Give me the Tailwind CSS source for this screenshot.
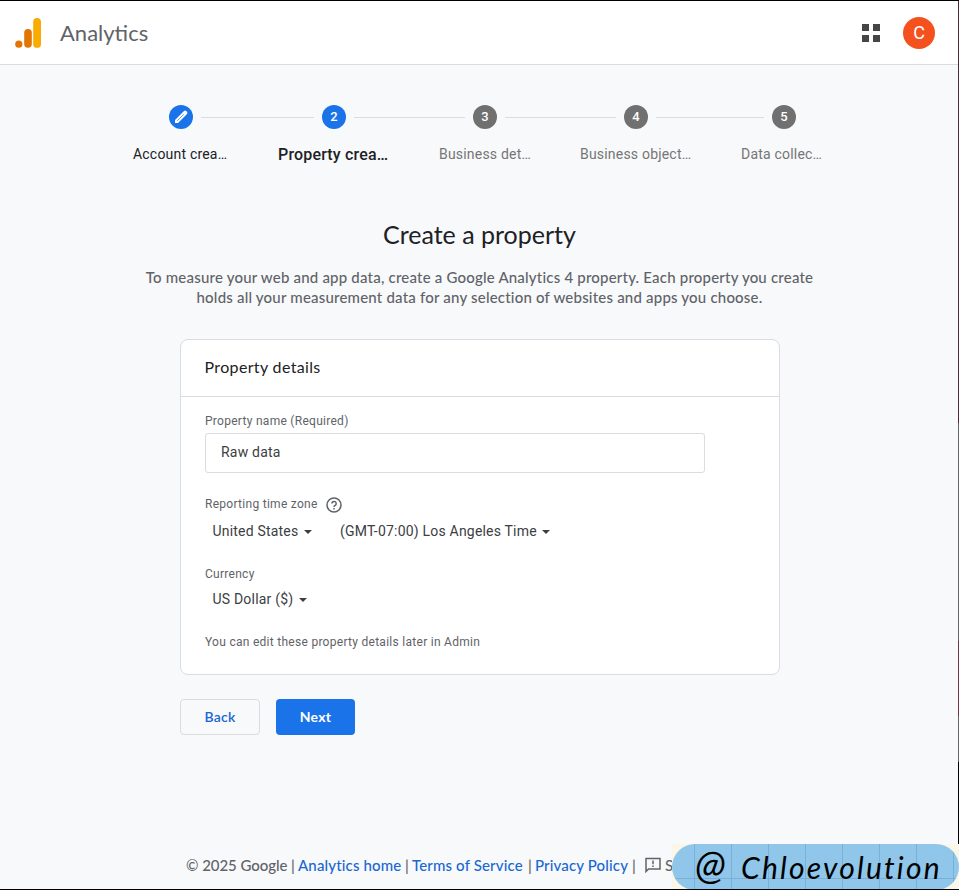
<!DOCTYPE html>
<html lang="en">
<head>
<meta charset="utf-8">
<title>Analytics</title>
<script src="https://cdn.jsdelivr.net/npm/@tailwindcss/browser@4"></script>
</head>
<body class="relative flex h-[890px] w-[959px] flex-col overflow-hidden border-t border-b border-black bg-[#f8f9fb] font-[Roboto,sans-serif] text-[#5f6368]">
<header class="flex h-16 shrink-0 items-center border-b border-[#dadce0] bg-white pr-6 pl-[15px]">
  <svg class="h-[31px] w-[27px] shrink-0" viewBox="0 0 27 31" aria-hidden="true"><circle cx="3.8" cy="27.200" r="3.600" fill="#e37400"/><rect x="9.2" y="12" width="7.600" height="18.800" rx="3.800" fill="#e37400"/><rect x="18.2" y="1" width="7.800" height="29.800" rx="3.900" fill="#f9ab00"/></svg>
  <h1 class="ml-[18px] font-[Lato,sans-serif] text-[22px] leading-7">Analytics</h1>
  <svg class="ml-auto h-[18px] w-[18px]" viewBox="0 0 18 18" fill="#444746"><path d="M0 0h7v7H0zM11 0h7v7h-7zM0 11h7v7H0zM11 11h7v7h-7z"/></svg>
  <div class="ml-[23px] flex h-8 w-8 items-center justify-center rounded-full bg-[#f4511e] text-[18px] text-white">C</div>
</header>
<main class="flex flex-1 flex-col">
  <nav class="pt-10">
    <div class="flex items-center gap-2 pl-[169px] text-[13px] font-medium text-white">
      <span class="flex h-6 w-6 items-center justify-center rounded-full bg-[#1a73e8]"><svg class="h-4 w-4" viewBox="0 0 16 16"><path d="M2 14v-3L11 2q1.200-1 2.400.2l.4.400q1.200 1.200.2 2.400L5 14z" fill="#fff"/><path d="M4.200 11.800 10.800 5.200" stroke="#1a73e8" stroke-width=".7"/></svg></span>
      <i class="h-px w-[113px] bg-[#dadce0]"></i>
      <span class="flex h-6 w-6 items-center justify-center rounded-full bg-[#1a73e8]">2</span>
      <i class="h-px w-[111px] bg-[#dadce0]"></i>
      <span class="flex h-6 w-6 items-center justify-center rounded-full bg-[#707070]">3</span>
      <i class="h-px w-[111px] bg-[#dadce0]"></i>
      <span class="flex h-6 w-6 items-center justify-center rounded-full bg-[#707070]">4</span>
      <i class="h-px w-[108px] bg-[#dadce0]"></i>
      <span class="flex h-6 w-6 items-center justify-center rounded-full bg-[#707070]">5</span>
    </div>
    <div class="mt-[15px] flex h-5 items-center pl-[133px] text-sm tracking-[0.2px] whitespace-nowrap text-[#757575]">
      <span class="w-[145px] text-[#202124]">Account crea…</span>
      <span class="w-[161px] pt-[2px] text-base font-medium tracking-[0.17px] text-[#202124]">Property crea…</span>
      <span class="w-[141px]">Business det…</span>
      <span class="w-[161px]">Business object…</span>
      <span>Data collec…</span>
    </div>
  </nav>
  <h2 class="mt-[54px] text-center font-[Lato,sans-serif] text-[25px] leading-8 text-[#202124]">Create a property</h2>
  <p class="mt-[17px] text-center font-[Lato,sans-serif] text-[15px] leading-5 font-medium tracking-[0.2px] whitespace-nowrap">To measure your web and app data, create a Google Analytics 4 property. Each property you create<br>holds all your measurement data for any selection of websites and apps you choose.</p>
  <section class="mt-8 ml-[180px] h-[336px] w-[600px] rounded-lg border border-[#dadce0] bg-white">
    <h3 class="flex h-[57px] items-center border-b border-[#dadce0] pb-[2px] pl-[23.500px] font-[Lato,sans-serif] text-base tracking-[0.35px] text-[#202124]">Property details</h3>
    <div class="flex flex-col pl-6">
      <label class="mt-4 text-xs leading-4 tracking-[0.28px]">Property name (Required)</label>
      <div class="mt-1 flex h-10 w-[500px] items-center rounded-[3px] border border-[#dadce0] pb-[2px] pl-[15px] text-sm tracking-[0.2px] text-[#3c4043]">Raw data</div>
      <div class="mt-[23px] flex h-4 items-center text-xs tracking-[0.28px]">Reporting time zone
        <svg class="mt-[2px] ml-2 h-4 w-4" viewBox="0 0 16 16" fill="none" stroke="#5f6368" stroke-width="1.500"><circle cx="8" cy="8" r="7"/><path d="M5.900 6.600a2.150 2.150 0 1 1 3.300 1.800C8.300 9 8 9.300 8 10.100"/><path d="M8 11v1.500"/></svg>
      </div>
      <div class="mt-[9px] flex h-5 items-center pl-[7.500px] text-sm tracking-[0.2px] text-[#3c4043]">
        <span>United States</span><svg class="mt-[2px] ml-[5.500px] h-1 w-2" viewBox="0 0 8 4"><path d="M0 0h8L4 4z" fill="#3c4043"/></svg>
        <span class="ml-7">(GMT-07:00) Los Angeles Time</span><svg class="mt-[2px] ml-[5px] h-1 w-2" viewBox="0 0 8 4"><path d="M0 0h8L4 4z" fill="#3c4043"/></svg>
      </div>
      <div class="mt-[25px] text-xs leading-4 tracking-[0.28px]">Currency</div>
      <div class="mt-[7px] flex h-5 items-center pl-[7.500px] text-sm tracking-[0.2px] text-[#3c4043]"><span>US Dollar ($)</span><svg class="mt-[2px] ml-[5.500px] h-1 w-2" viewBox="0 0 8 4"><path d="M0 0h8L4 4z" fill="#3c4043"/></svg></div>
      <p class="mt-[25px] text-xs leading-4 tracking-[0.28px]">You can edit these property details later in Admin</p>
    </div>
  </section>
  <div class="mt-6 flex gap-4 pl-[180px] font-[Lato,sans-serif] text-sm font-semibold tracking-[0.25px]">
    <button class="h-9 w-20 rounded border border-[#dadce0] text-[#1967d2]">Back</button>
    <button class="h-9 w-[79px] rounded bg-[#1a73e8] font-bold text-white">Next</button>
  </div>
</main>
<footer class="flex h-[49px] shrink-0 items-center pt-px pl-[186px] font-[Lato,sans-serif] text-[15px] font-medium tracking-[0.15px] whitespace-nowrap">
  <span class="w-[104px] tracking-[-0.05px]">© 2025 Google</span><span class="w-2 pl-px">|</span><a class="w-[106px] text-[#1967d2]">Analytics home</a><span class="w-2 pl-px">|</span><a class="w-[115px] text-[#1967d2]">Terms of Service</a><span class="w-2 pl-px">|</span><a class="w-[96px] text-[#1967d2]">Privacy Policy</a><span class="w-2 pl-px">|</span>
  <svg class="ml-[6px] h-4 w-4" viewBox="0 0 16 16" fill="none" stroke="#5f6368" stroke-width="1.500"><path d="M1 14.500V1.500h14v10.500H3.500z"/><path d="M8 3.500v3.700M8 8.400v1.600"/></svg>
  <span class="ml-1">S</span>
</footer>
<div class="absolute top-0 right-0 flex h-[843px] w-px flex-col">
  <i class="h-[422px] bg-[#4e2b30]"></i><i class="h-[218px] bg-[#656565]"></i><i class="h-[75px] bg-[#70353f]"></i><i class="h-[46px] bg-[#656565]"></i><i class="flex-1 bg-black"></i>
</div>
<div class="absolute right-0 -bottom-px h-[46px] w-[287px] bg-[#faf6e8]">
  <div class="relative flex h-[46px] items-center overflow-hidden rounded-full bg-[#8fc6ea] pl-[23px] font-[Lato,sans-serif] text-[30px] text-black italic">
    <svg class="absolute inset-0 h-[46px] w-[287px]" viewBox="0 0 287 46"><path d="M22.500 0v46M59.500 0v46M96.500 0v46M133.500 0v46M170.500 0v46M207.500 0v46M244.500 0v46M281.500 0v46M0 34.500h287" stroke="#78b0da"/></svg>
    <span class="relative w-[46px] pb-[6px] text-[40px] leading-[40px]">@</span><span class="relative tracking-[2.200px]">Chloevolution</span>
  </div>
</div>
</body>
</html>
